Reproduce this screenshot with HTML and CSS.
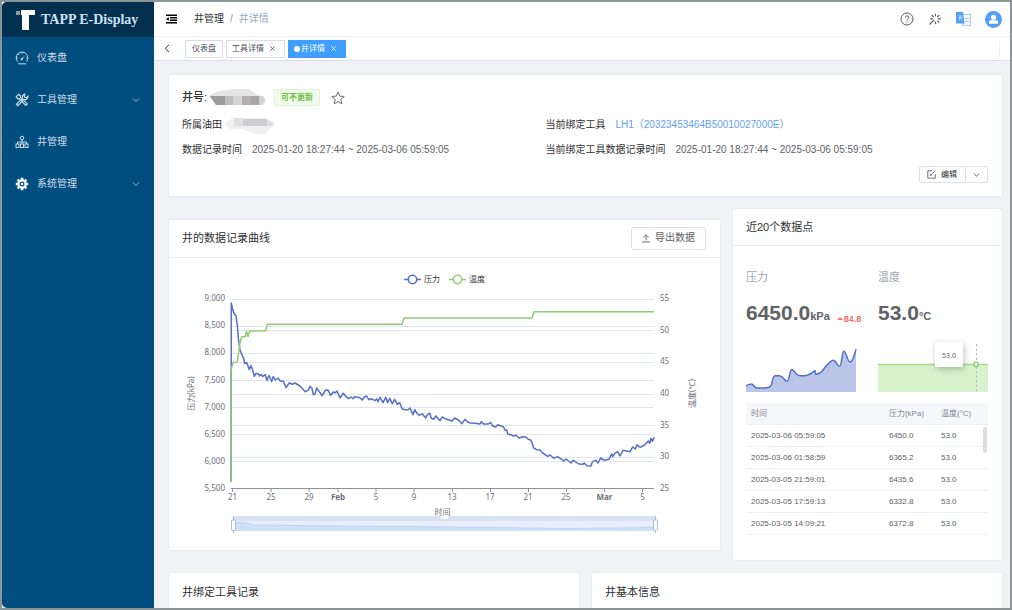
FILE: index.html
```html
<!DOCTYPE html>
<html lang="zh-CN">
<head>
<meta charset="utf-8">
<title>TAPP E-Display</title>
<link rel="stylesheet" href="styles.css">
</head>
<body>
<div class="app">
  <aside class="sidebar">
    <div class="brand">
      <svg class="brand-mark" width="20" height="20" viewBox="0 0 20 20"><path fill="#8f9ba5" d="M1 1h4v4H1z"/><path fill="#fff" d="M6 0h14v5h-6v15H7V5H6z"/></svg>
      <span class="brand-name">TAPP E-Display</span>
    </div>
    <nav class="menu">
      <a class="menu-item" href="#">
        <svg width="14" height="14" viewBox="0 0 14 14" fill="none" stroke="currentColor"><path d="M2.600 10.600A5.800 5.800 0 1 1 11.400 10.600"/><path d="M3 12.800h8M6.600 8.400L9 5.600M1.400 7h1.400M11.200 7h1.400M7 1.400v1.400M3.200 3.200l.9.9"/><circle cx="6.600" cy="8.200" r=".8"/></svg>
        <span>仪表盘</span>
      </a>
      <a class="menu-item" href="#">
        <svg width="14" height="14" viewBox="0 0 14 14" fill="none" stroke="currentColor" stroke-width="1.200"><path d="M1.200 3.800l2.400-2.600 2 1.600-.3 1.500 6.900 6.600-1.400 1.500-6.700-6.700-1.300.2z"/><path d="M9.800 1.200a3 3 0 0 0-2.200 3.800L1.400 11.200l1.500 1.500L9 6.500a3 3 0 0 0 3.900-3.300L11.400 4.600 9.700 4.300 9.500 2.700z"/></svg>
        <span>工具管理</span>
        <svg class="menu-caret" width="8" height="8" viewBox="0 0 8 8" fill="none" stroke="currentColor"><path d="M1 2.500l3 3 3-3"/></svg>
      </a>
      <a class="menu-item" href="#">
        <svg width="14" height="14" viewBox="0 0 14 14" fill="none" stroke="currentColor"><circle cx="7" cy="3" r="1.800"/><path d="M7 5v4M2.500 9V7h9v2"/><rect x="1" y="9" width="3" height="3.500"/><rect x="5.500" y="9" width="3" height="3.500"/><rect x="10" y="9" width="3" height="3.500"/></svg>
        <span>井管理</span>
      </a>
      <a class="menu-item" href="#">
        <svg width="14" height="14" viewBox="0 0 14 14"><g stroke="#fff" stroke-width="2.600"><path d="M7 .8v12.400M.8 7h12.400M2.600 2.600l8.800 8.800M11.400 2.600l-8.800 8.800"/></g><circle cx="7" cy="7" r="4.700" fill="#fff"/><circle cx="7" cy="7" r="1.900" fill="#fff" stroke="#004d80" stroke-width="1.200"/></svg>
        <span>系统管理</span>
        <svg class="menu-caret" width="8" height="8" viewBox="0 0 8 8" fill="none" stroke="currentColor"><path d="M1 2.500l3 3 3-3"/></svg>
      </a>
    </nav>
  </aside>

  <div class="page">
    <header class="topbar">
      <button class="icon-btn" type="button" aria-label="折叠菜单"><svg width="11" height="10" viewBox="0 0 11 10" fill="#000"><path d="M0 .5h11v1.500H0zM4 3.100h7v1.300H4zM4 5.600h7v1.300H4zM0 8h11v1.500H0zM0 5l2.800-2v4z"/></svg></button>
      <div class="crumbs"><a href="#">井管理</a><span class="sep">/</span><span class="here">井详情</span></div>
      <div class="tools">
        <button class="icon-btn" type="button" aria-label="帮助"><svg width="14" height="14" viewBox="0 0 14 14" fill="none" stroke="#5a5e66"><circle cx="7" cy="7" r="6"/><path d="M5.200 5.500a1.800 1.800 0 1 1 2.600 1.700c-.6.300-.8.600-.8 1.300M7 9.600v1.200"/></svg></button>
        <button class="icon-btn" type="button" aria-label="主题"><svg width="14" height="14" viewBox="0 0 14 14" fill="none" stroke="#5a5e66" stroke-width="1.100"><path d="M1.500 12.500l4.700-4.700M7.500 1.500v2.700M7.500 9.500v2.700M10 6.900h2.800M2.300 6.900H5M9.300 5l2-2M9.300 8.700l2 2M5.700 5L3.800 3"/></svg></button>
        <button class="icon-btn" type="button" aria-label="语言"><svg width="15" height="14" viewBox="0 0 15 14"><rect x="6.500" y="2.500" width="8" height="11" fill="#f3f8ff" stroke="#a5ccfc"/><path d="M9 6.500h4M9 9.500h4" stroke="#a5ccfc"/><path fill="#559ff8" d="M0 0h7l1.500 11.500H0z"/><path d="M2.500 4h3.800M2.500 5.600h3.800M2.700 8.200l1.800-2.600 1.600 2.600" stroke="#d6e8ff" fill="none" stroke-width=".8"/></svg></button>
        <button class="icon-btn" type="button" aria-label="用户"><svg width="17" height="17" viewBox="0 0 17 17"><circle cx="8.500" cy="8.500" r="8.500" fill="#559ff8"/><circle cx="8.500" cy="6.300" r="2.600" fill="#fff"/><path fill="#fff" d="M4 12.800V11c0-1.300 1-1.700 2-1.700h5c1 0 2 .4 2 1.700v1.800z"/></svg></button>
      </div>
    </header>
    <div class="tabs">
      <button class="icon-btn" type="button" aria-label="向左"><svg width="6" height="9" viewBox="0 0 6 9" fill="none" stroke="#303133"><path d="M5 .8L1.200 4.500 5 8.200"/></svg></button>
      <a class="tab tab-first" href="#">仪表盘</a>
      <a class="tab tab-closable" href="#">工具详情<svg width="5" height="5" viewBox="0 0 5 5" stroke="currentColor" stroke-width=".8"><path d="M.3.300l4.400 4.400M4.700.300L.3 4.700"/></svg></a>
      <a class="tab tab-closable tab-active" href="#"><i class="dot"></i>井详情<svg width="5" height="5" viewBox="0 0 5 5" stroke="currentColor" stroke-width=".8"><path d="M.3.300l4.400 4.400M4.700.300L.3 4.700"/></svg></a>
      <i class="tabs-end"></i>
    </div>

    <main class="content">
      <section class="card well">
        <div class="well-title">
          <h1>井号:</h1>
          <svg class="mask-name" width="57" height="17" viewBox="0 0 57 17"><path fill="#e5e5e6" d="M1 6L10 2l14-2h16l7 5 8 3 2 4-3 4H7L0 8z"/><path fill="#9c9c9b" d="M1 7h15v9H7z"/><path fill="#bebebf" d="M16 7h8v9h-8z"/><path fill="#d5d5d7" d="M24 7h9v9h-9z"/><path fill="#b3afae" d="M33 7h9v9h-9z"/><path fill="#a5a6aa" d="M42 7h8v9h-8z"/><path fill="#d1d2d4" d="M50 7h4l2 4-3 5h-3z"/></svg>
          <span class="tag">可不更新</span>
          <button class="icon-btn" type="button" aria-label="收藏"><svg width="14" height="14" viewBox="0 0 14 14" fill="none" stroke="#6b6e75"><path stroke-linejoin="round" d="M7 1l1.700 4.100 4.500.400-3.400 2.900 1 4.400L7 10.500l-3.800 2.300 1-4.400L.8 5.500l4.500-.4z"/></svg></button>
        </div>
        <dl class="facts">
          <div class="fact"><dt>所属油田</dt><dd class="fact-mask"><svg width="51" height="17" viewBox="0 0 51 17"><path fill="#f0f0f1" d="M0 6l9-5h33l7 4 2 3-6 4-3 5H31l-13-5H6z"/><path fill="#dfdfe2" d="M10 1h9v8h-9z"/><path fill="#cdcdd1" d="M19 2h24v7H19z"/><path fill="#dddde0" d="M43 3l6 3v3h-6z"/></svg></dd></div>
          <div class="fact"><dt>当前绑定工具</dt><dd><a href="#">LH1（20323453464B50010027000E）</a></dd></div>
          <div class="fact"><dt>数据记录时间</dt><dd>2025-01-20 18:27:44 ~ 2025-03-06 05:59:05</dd></div>
          <div class="fact"><dt>当前绑定工具数据记录时间</dt><dd>2025-01-20 18:27:44 ~ 2025-03-06 05:59:05</dd></div>
        </dl>
        <div class="well-actions">
          <button class="btn-small" type="button"><svg width="9" height="9" viewBox="0 0 9 9" fill="none" stroke="#606266" stroke-width=".9"><path d="M5 .8H.8v7.400h7.400V4M3.500 5.500L8.300.700M3.400 4.300v1.300h1.300"/></svg>编辑</button><button class="btn-small btn-caret" type="button" aria-label="更多"><svg width="7" height="6" viewBox="0 0 7 6" fill="none" stroke="#606266" stroke-width=".9"><path d="M.8 1.500l2.700 2.700 2.700-2.700"/></svg></button>
        </div>
      </section>

      <div class="row row-main">
        <section class="card curve">
          <div class="card-head"><h2>井的数据记录曲线</h2>
            <button class="btn" type="button"><svg width="8" height="9" viewBox="0 0 8 9" fill="none" stroke="#606266" stroke-width=".9"><path d="M0 8h8M4 6.500V1M1.300 3.500L4 .8l2.700 2.700"/></svg>导出数据</button></div>
          <svg class="chart" viewBox="169 258 551 292">
            <g stroke="#e0e6f1"><path d="M231 299.500h423M231 326.500h423M231 353.500h423M231 380.500h423M231 407.500h423M231 434.500h423M231 461.500h423M231 330.500h423M231 362.500h423M231 394.500h423M231 425.500h423M231 457.500h423"/></g>
            <path stroke="#8d919c" d="M231 488.500h423M232.500 488v4M271 488v4M309 488v4M338 488v4M376 488v4M414 488v4M452.500 488v4M490.500 488v4M528.500 488v4M566.500 488v4M604.500 488v4M642.500 488v4"/>
            <polyline class="line blue" points="231,482 231.300,303 232.300,308 234,313.500 236,316 237.300,325 238.300,338 240,350 241.700,354 243.300,357.500 244.700,363.500 246.700,362.500 249.300,369.500 251,365.500 252.700,370 254.300,376.300 256,373.500 258.700,374 259.500,376 261.300,374.500 262.700,376.500 265.300,374.700 267,380.500 269,375.500 271.700,381.500 273.300,376.500 275.300,380 278.300,378 280,381 283.300,381 286,387.500 289.300,383 292.700,384.300 295,383 300,386 305.300,391.700 308,390.300 310,386.300 312,388.300 313.300,394.700 315,394 316.700,388 319.300,391.700 322.300,395.700 325.300,390.300 328,390 330.700,395.300 333.300,392 335.300,392.700 337,391 340,398 343.300,393.300 346,396.700 348.700,398.700 351,397 353,398.700 354.700,396.700 360,397.700 362.300,400 364.300,397 366.700,396 368.700,399.700 371.300,398.700 375,400.700 376.700,398.700 378,401.700 380,397.300 383,402.700 385.700,397.300 387.700,402.700 389.700,398.300 392.300,403.700 394.700,399.300 397.300,404.300 399.700,402.700 402.300,409 405,409.700 408,409.700 410,408 413,414.700 414.700,409.700 416.700,413 419.300,415.300 422.300,413.700 425.700,418 427.700,414.300 430,413.300 431,418 433.700,419.300 435.700,416 440,420.700 442,417 445.300,418.700 452.300,421 454.500,418 458.300,420 462,423.700 465,419.300 468,422.300 470.700,423 475,423.300 480,424 481.300,421.700 483.300,424 488.300,424 490.700,422.300 492.300,425.700 495.700,427 497.700,424.700 503.300,426.700 505.300,430.300 506.700,430 508,434.300 510.700,434.700 513.300,436 516,435.300 519.300,438 522.700,436.700 526,437.300 528.300,439.300 530.700,440 532,442.700 533.700,448 536.700,449.700 540,450 542.700,453 547.700,456.300 550,455 554,458.300 557.300,456.700 560,458 563.700,461 566,459 571,463 573.300,460.300 578.700,464 582.700,464.300 584.300,463 586.700,465.700 591,466 592.300,462 595.300,460 598,463 600.700,458 604.300,460.300 609,459.300 611.700,454 612.700,456.700 614.700,453.300 617.700,451.700 620,456 623,450.300 630,451.700 632.700,447 635.300,449 637,444.700 640,447.300 644.700,445 648.300,441 649.700,443.300 651,438.300 652.300,441.300 654.300,437.300"/>
            <polyline class="line green" points="231,482 231,371 232,366 233.500,362.300 237.300,362 238,357 240,343 241.500,337 245.300,336.500 246.500,331 248,336.500 249.500,331 265.700,330.700 267.300,324.300 402,324.300 404,318 532,318 534,311.700 654,311.700"/>
            <path class="line blue" d="M404 279.500h17"/><circle cx="412.500" cy="279.500" r="4.200" fill="#fff" class="line blue"/>
            <path class="line green" d="M449 279.500h17"/><circle cx="457.500" cy="279.500" r="4.200" fill="#fff" class="line green"/>
            <g class="legend"><text x="424" y="282">压力</text><text x="469" y="282">温度</text></g>
            <g class="axis" text-anchor="end"><text x="225" y="301">9,000</text><text x="225" y="328">8,500</text><text x="225" y="355">8,000</text><text x="225" y="383">7,500</text><text x="225" y="410">7,000</text><text x="225" y="437">6,500</text><text x="225" y="464">6,000</text><text x="225" y="491">5,500</text></g>
            <g class="axis"><text x="660" y="301">55</text><text x="660" y="333">50</text><text x="660" y="364">45</text><text x="660" y="396">40</text><text x="660" y="428">35</text><text x="660" y="459">30</text><text x="660" y="491">25</text></g>
            <g class="axis" text-anchor="middle"><text x="232.500" y="500">21</text><text x="271" y="500">25</text><text x="309" y="500">29</text><text x="338" y="500" class="month">Feb</text><text x="376" y="500">5</text><text x="414" y="500">9</text><text x="452" y="500">13</text><text x="490" y="500">17</text><text x="528" y="500">21</text><text x="566" y="500">25</text><text x="604.500" y="500" class="month">Mar</text><text x="642.500" y="500">5</text>
              <text x="442.500" y="515">时间</text><text transform="translate(194 393.500) rotate(-90)">压力(kPa)</text><text transform="translate(695 393.500) rotate(-90)">温度(℃)</text></g>
            <path fill="#d9e1f2" d="M233 516h422v5H233z"/><path fill="#e7eefd" d="M233 521h422v10H233z"/>
            <path fill="#d0dffb" d="M233 522l14 1 6 2 90 1 120 1 100 1.500 92-1V531H233z"/><path fill="none" stroke="#b3cbf8" stroke-width=".7" d="M233 522l14 1 6 2 90 1 120 1 100 1.500 92-1"/>
            <path fill="#fff" d="M440 516h9l-2 3h-5z"/>
            <path stroke="#a9bbdc" d="M233.500 516v17M655.500 516v17"/><rect x="231.500" y="520" width="4" height="10.500" rx="1" fill="#fff" stroke="#a9bbdc"/><rect x="653.500" y="520" width="4" height="10.500" rx="1" fill="#fff" stroke="#a9bbdc"/>
          </svg>
        </section>

        <section class="card recent">
          <div class="card-head"><h2>近20个数据点</h2></div>
          <div class="recent-body">
            <div class="stats">
              <div class="stat">
                <div class="stat-label">压力</div>
                <div class="stat-value"><b>6450.0</b><span class="unit">kPa</span><span class="rise"><svg width="6" height="3" viewBox="0 0 6 3" fill="#f56c6c"><path d="M3 0l3 3H0z"/></svg>84.8</span></div>
                <svg class="spark" viewBox="747 343 110 50"><path fill="#bac5e9" d="M747 387c3-2 6-3 8 0 2 3 3 2.300 6 2.100 7-.4 10 .3 11.500-3.600 1.500-5 1-8.800 4-8.800h4c4 0 5 5.600 7.500 5.600 3 0 2-11.800 5-11.800 2.500 0 3 5.700 7 6.100 8 .7 9-.3 16-5l.7 3.700c6-.5 7-4 9.300-7 4-4.500 6-7 8.300-7 2.700 0 4 6 6 6 3 0 2.200-15 4.700-15 2 0 3.500 10.600 6 10.600 3 0 4.500-8 6-12.600V393H747z"/><path class="line blue" d="M747 387c3-2 6-3 8 0 2 3 3 2.300 6 2.100 7-.4 10 .3 11.500-3.600 1.500-5 1-8.800 4-8.800h4c4 0 5 5.600 7.500 5.600 3 0 2-11.800 5-11.800 2.500 0 3 5.700 7 6.100 8 .7 9-.3 16-5l.7 3.700c6-.5 7-4 9.300-7 4-4.500 6-7 8.300-7 2.700 0 4 6 6 6 3 0 2.200-15 4.700-15 2 0 3.500 10.600 6 10.600 3 0 4.500-8 6-12.600"/></svg>
              </div>
              <div class="stat">
                <div class="stat-label">温度</div>
                <div class="stat-value"><b>53.0</b><span class="unit">°C</span></div>
                <svg class="spark" viewBox="879 343 110 50"><path fill="#d8f2cc" d="M879 365.500h110V393H879z"/><path stroke="#a3dd85" stroke-width="1.300" d="M879 365.500h110"/><path stroke="#b9bcc4" stroke-dasharray="2.500 2" d="M977.500 345v48"/><circle cx="977" cy="365.500" r="2.200" fill="#fff" class="line green"/><rect class="tip" x="936" y="343" width="28" height="25" rx="2"/><text class="tip-text" x="950" y="359" text-anchor="middle">53.0</text></svg>
              </div>
            </div>
            <div class="table-wrap">
              <table class="points">
                <thead><tr><th class="col-time">时间</th><th>压力(kPa)</th><th>温度(°C)</th></tr></thead>
                <tbody>
                  <tr><td>2025-03-06 05:59:05</td><td>6450.0</td><td>53.0</td></tr>
                  <tr><td>2025-03-06 01:58:59</td><td>6365.2</td><td>53.0</td></tr>
                  <tr><td>2025-03-05 21:59:01</td><td>6435.6</td><td>53.0</td></tr>
                  <tr><td>2025-03-05 17:59:13</td><td>6332.8</td><td>53.0</td></tr>
                  <tr><td>2025-03-05 14:09:21</td><td>6372.8</td><td>53.0</td></tr>
                </tbody>
              </table>
              <i class="thumb"></i>
            </div>
          </div>
        </section>
      </div>

      <div class="row row-bottom">
        <section class="card"><div class="card-head"><h2>井绑定工具记录</h2></div><div class="card-fill"></div></section>
        <section class="card"><div class="card-head"><h2>井基本信息</h2></div><div class="card-fill"></div></section>
      </div>
    </main>
  </div>
</div>
</body>
</html>
```
FILE: styles.css
```css
* { box-sizing: border-box; }
body {
  margin: 0;
  font-family: "Liberation Sans", "Noto Sans CJK SC", sans-serif;
  font-size: 10px;
  line-height: 14px;
  color: #303133;
}
a { color: inherit; text-decoration: none; }
h1, h2, dl, dd { margin: 0; }
svg { display: block; flex: none; }
button { font: inherit; color: inherit; }
.icon-btn { display: flex; padding: 0; border: 0; background: none; }

.app { display: flex; height: 100vh; border: 2px solid #8a9696; background: #fff; overflow: hidden; }

.sidebar { flex: none; width: 152px; background: #004d80; border-radius: 5px 0 0 5px; overflow: hidden; color: #cfdbe5; }
.brand { display: flex; align-items: center; gap: 6px; height: 35px; padding-left: 13px; background: #03304f; }
.brand-name { font: bold 14px/18px "Liberation Serif", serif; color: #cfe2f5; white-space: nowrap; }
.menu { display: flex; flex-direction: column; gap: 1px; }
.menu-item { display: flex; align-items: center; gap: 8px; height: 41px; padding: 0 14px 0 13px; }
.menu-caret { margin-left: auto; color: #9db8cc; }

.page { flex: 1; min-width: 0; display: flex; flex-direction: column; background: #f0f2f5; }
.topbar { flex: none; display: flex; align-items: center; height: 35px; padding: 0 8px 0 12px; background: #fff; border-bottom: 1px solid #f0f1f3; }
.crumbs { display: flex; gap: 6px; margin-left: 17px; }
.crumbs .sep { color: #8c939d; }
.crumbs .here { color: #97a8be; }
.tools { display: flex; align-items: center; gap: 14px; margin-left: auto; }

.tabs { flex: none; display: flex; align-items: center; gap: 3px; height: 24px; padding: 0 10px; background: #fff; border-bottom: 1px solid #dcdfe4; font-size: 8px; line-height: 16px; }
.tab { display: flex; align-items: center; gap: 6px; padding: 0 6px; border: 1px solid #d8dce5; color: #495060; }
.tab-first { margin-left: 12px; }
.tab-closable { padding: 0 9px 0 5px; }
.tab-active { background: #409eff; border-color: #409eff; color: #fff; }
.dot { width: 6px; height: 6px; border-radius: 50%; background: #fff; margin-right: -5px; }
.tabs-end { margin-left: auto; width: 1px; height: 16px; background: #eef0f2; }

.content { flex: 1; min-height: 0; overflow: hidden; padding: 13px 7px 0 14px; }
.card { background: #fff; border: 1px solid #e8ebf0; border-radius: 3px; }
.card-head { display: flex; align-items: center; justify-content: space-between; height: 38px; padding: 0 14px 0 13px; border-bottom: 1px solid #e8ebf0; }
h2 { font-size: 11px; font-weight: 400; line-height: 16px; }

.well { padding: 14px 14px 13px 13px; }
.well-title { display: flex; align-items: center; height: 17px; }
h1 { font-size: 11px; line-height: 17px; font-weight: 500; margin-right: 2px; }
.tag { margin: 0 11px 0 8px; padding: 0 6px; border: 1px solid #e1f3d8; border-radius: 2px; background: #f0f9eb; color: #67c23a; font-size: 8px; font-weight: 700; line-height: 15px; }
.facts { display: grid; grid-template-columns: 363fr 442fr; grid-auto-rows: 25px; margin-top: 6px; }
.fact { display: flex; align-items: center; gap: 10px; white-space: nowrap; }
.fact dd { color: #606266; }
.fact a { color: #5f9ff8; }
.fact-mask { align-self: flex-start; margin: 5px 0 0 -8px; }
.well-actions { display: flex; justify-content: flex-end; margin-top: 4px; }
.btn-small { display: flex; align-items: center; gap: 5px; height: 17px; padding: 0 8px 0 7px; border: 1px solid #dcdfe6; border-radius: 2px 0 0 2px; background: #fff; font-size: 8px; line-height: 15px; }
.btn-caret { margin-left: -1px; padding: 0 7px; border-radius: 0 2px 2px 0; }

.row { display: grid; }
.row-main { grid-template-columns: 553fr 271fr; gap: 11px; align-items: center; margin-top: 11px; }
.btn { display: flex; align-items: center; gap: 5px; height: 23px; padding: 0 10px; border: 1px solid #dcdfe6; border-radius: 3px; background: #fff; font-size: 10px; line-height: 14px; color: #606266; }
.chart { width: 100%; height: auto; }
.line { fill: none; stroke-width: 1.5; stroke-linejoin: round; }
circle.line { fill: #fff; }
.blue { stroke: #5470c6; }
.green { stroke: #91cc75; }
.legend { font: 8px "Noto Sans CJK SC", sans-serif; fill: #333; }
.axis { font: 8px "Noto Sans", "Noto Sans CJK SC", sans-serif; fill: #6e7079; }
.month { font-weight: 700; }

.recent .card-head { height: 37px; }
.recent-body { padding: 23px 14px 25px 13px; }
.stats { display: grid; grid-template-columns: 1fr 1fr; gap: 22px; }
.stat { min-width: 0; }
.stat-label { font-size: 11px; line-height: 16px; color: #a4a7ad; }
.stat-value { display: flex; align-items: baseline; margin-top: 16px; height: 24px; line-height: 24px; font-weight: 700; color: #606266; white-space: nowrap; }
.stat-value b { font-size: 21px; }
.unit { font-size: 11px; }
.rise { display: flex; align-items: center; gap: 1px; margin-left: 7px; font-size: 9px; line-height: 12px; color: #f56c6c; }
.spark { width: 100%; height: auto; margin-top: 17px; overflow: visible; }
.tip { fill: #fff; filter: drop-shadow(1px 2px 3px rgba(0, 0, 0, 0.25)); }
.tip-text { font: 7px "Noto Sans", sans-serif; fill: #666; }

.table-wrap { position: relative; margin-top: 11px; }
.points { width: 100%; border-collapse: separate; border-spacing: 0; table-layout: fixed; font-size: 8px; line-height: 21px; color: #606266; }
.points th, .points td { padding: 0 0 0 5px; border-bottom: 1px solid #ebeef5; text-align: left; white-space: nowrap; }
.points th { background: #f5f7fa; color: #85888f; font-weight: 400; }
.col-time { width: 57%; }
.thumb { position: absolute; top: 24px; right: 1px; width: 4px; height: 26px; border-radius: 2px; background: #dddee0; }

.row-bottom { grid-template-columns: 1fr 1fr; gap: 11px; margin-top: 11px; }
.card-fill { height: 120px; }
```
